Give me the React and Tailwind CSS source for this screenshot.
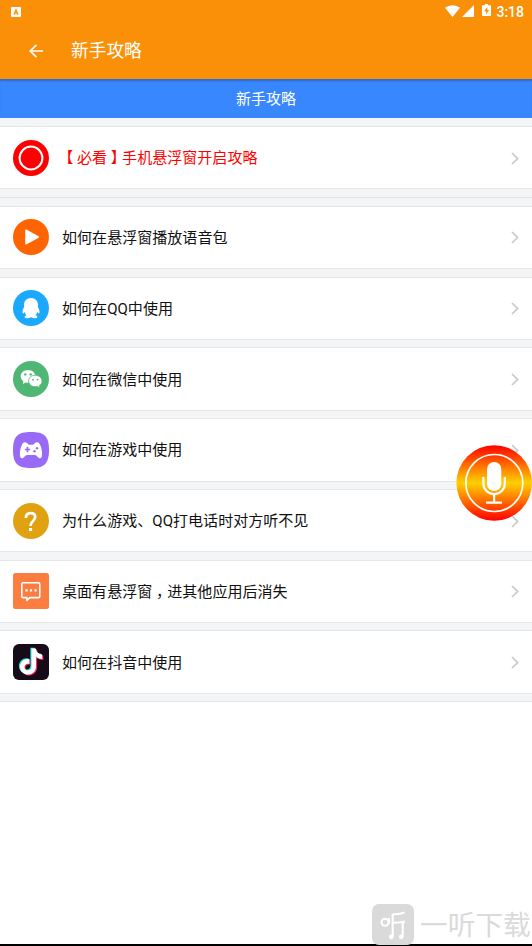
import React from "react";

function Chevron() {
  return (
    <svg className="h-[14px] w-2 shrink-0" viewBox="0 0 8 14" fill="none" stroke="#c8c8cc" strokeWidth="1.7">
      <path d="M1 2 6.6 7.500 1 13" />
    </svg>
  );
}

function RecordIcon() {
  return (
    <svg className="size-9 shrink-0" viewBox="0 0 36 36">
      <circle cx="18" cy="18" r="18" fill="#fe0000" />
      <circle cx="18" cy="18" r="11.4" fill="none" stroke="#fff" strokeWidth="2" />
    </svg>
  );
}

function PlayIcon() {
  return (
    <svg className="size-9 shrink-0" viewBox="0 0 36 36">
      <circle cx="18" cy="18" r="18" fill="#ff6400" />
      <path d="M13 11.2v13.600L25.200 18z" fill="#fff" stroke="#fff" strokeWidth="1.6" strokeLinejoin="round" />
    </svg>
  );
}

function QQIcon() {
  return (
    <svg className="size-9 shrink-0" viewBox="0 0 36 36">
      <circle cx="18" cy="18" r="18" fill="#1aa9ff" />
      <path
        d="M18 8c-4.300 0-7 3-7 7v2.200c-.9 1.600-1.500 3.200-1.500 4.600 0 1 .2 1.600.6 1.700.5.100 1.100-.7 1.500-1.400.4 1.300 1 2.300 1.900 3.200-1.200.4-1.900 1-1.900 1.600 0 .8 1.500 1.300 3.300 1.300 1.400 0 2.600-.5 3.100-1.200.5.700 1.700 1.200 3.100 1.200 1.800 0 3.300-.5 3.300-1.300 0-.6-.7-1.200-1.900-1.600.9-.9 1.500-1.900 1.900-3.200.4.700 1 1.500 1.500 1.400.4-.1.600-.7.600-1.700 0-1.400-.6-3-1.500-4.600V15c0-4-2.700-7-7-7z"
        fill="#fff"
      />
    </svg>
  );
}

function WeChatIcon() {
  return (
    <svg className="size-9 shrink-0" viewBox="0 0 36 36">
      <circle cx="18" cy="18" r="18" fill="#50b674" />
      <path d="M15 9c-4.200 0-7.300 2.800-7.300 6.300 0 2 1 3.800 2.700 5L9.800 23l2.900-1.600c.8.200 1.500.3 2.300.3 4.200 0 7.300-2.800 7.300-6.400C22.300 11.800 19.200 9 15 9z" fill="#fff" />
      <path
        d="M22.300 14.300c-3.800 0-6.700 2.500-6.700 5.700s2.900 5.700 6.700 5.700c.8 0 1.500-.1 2.200-.3l2.400 1.500-.6-2.400c1.700-1 2.700-2.700 2.700-4.500 0-3.200-2.900-5.700-6.700-5.700z"
        fill="#fff"
        stroke="#50b674"
        strokeWidth="0.8"
      />
      <g fill="#50b674">
        <circle cx="12.300" cy="13.400" r="1.200" />
        <circle cx="17.700" cy="13.400" r="1.200" />
        <circle cx="20" cy="18.700" r="0.9" />
        <circle cx="24.600" cy="18.700" r="0.9" />
      </g>
    </svg>
  );
}

function GameIcon() {
  return (
    <svg className="size-9 shrink-0" viewBox="0 0 36 36">
      <path d="M18 0C31 0 36 4 36 18S31 36 18 36 0 32 0 18 5 0 18 0z" fill="#996af5" />
      <path
        d="M10.200 10.800c1-.9 3-.8 3.800.2.600.7 1.300 1.700 2.100 1.700h3.800c.8 0 1.500-1 2.100-1.700.8-1 2.800-1.100 3.800-.2 2 2.200 3.300 7.300 3.300 11.600 0 2.500-.8 3.800-2.100 3.800-2 0-3-3.300-5.100-3.300h-7.800c-2.100 0-3.100 3.300-5.100 3.300-1.300 0-2.100-1.300-2.100-3.800 0-4.300 1.300-9.400 3.300-11.600z"
        fill="#fff"
      />
      <path d="M14.500 14.800v5.400M11.800 17.500h5.400" stroke="#996af5" strokeWidth="1.700" />
      <circle cx="24" cy="16.300" r="1.200" fill="#996af5" />
      <circle cx="21.500" cy="19.300" r="1.200" fill="#996af5" />
    </svg>
  );
}

function QuestionIcon() {
  return (
    <svg className="size-9 shrink-0" viewBox="0 0 36 36">
      <circle cx="18" cy="18" r="18" fill="#e1a212" />
      <path d="M12.900 15c0-3.200 1.800-4.900 4.700-4.900 2.800 0 4.600 1.600 4.600 4 0 3.600-4.700 4.200-4.700 8.900" fill="none" stroke="#fff" strokeWidth="2.700" />
      <rect x="16" y="25" width="3.100" height="3.100" fill="#fff" />
    </svg>
  );
}

function ChatIcon() {
  return (
    <svg className="size-9 shrink-0" viewBox="0 0 36 36">
      <rect width="36" height="36" rx="2.500" fill="#fb7d40" />
      <path
        d="M10.200 9.800h15.200c.8 0 1.400.6 1.400 1.400v12c0 .8-.6 1.400-1.400 1.400h-8.600l-2.900 2.900v-2.900h-3.700c-.8 0-1.400-.6-1.400-1.400v-12c0-.8.6-1.400 1.400-1.400z"
        fill="none"
        stroke="#fff"
        strokeWidth="1.600"
        strokeLinejoin="round"
      />
      <path d="M12.400 17.300h2.200M16.900 17.300h2.200M21.400 17.300h2.200" stroke="#fff" strokeWidth="2.200" />
    </svg>
  );
}

function DouyinIcon() {
  const note = "M18.300 4.500h4.300c.5 3.600 2.700 5.700 6.400 6v4.500c-2.400 0-4.500-.7-6.200-1.900v9.300c0 4.700-3.600 8.100-8 8.100s-8-3.400-8-7.800c0-4.800 4.300-8.500 9.400-7.600v4.800c-2.700-.8-4.900.7-4.900 3s1.600 3.400 3.500 3.400c2.100 0 3.500-1.500 3.500-3.800z";
  return (
    <svg className="size-9 shrink-0" viewBox="0 0 36 36">
      <rect width="36" height="36" rx="6" fill="#170b1a" />
      <path d={note} fill="#25e5e0" transform="translate(-.9 -.8)" />
      <path d={note} fill="#fe2c55" transform="translate(1.300 .9)" />
      <path d={note} fill="#fff" transform="translate(.2 0)" />
    </svg>
  );
}

// Full-width punctuation with its glyph centred in the character cell.
function Punct({ children }) {
  return (
    <span className="inline-block w-[15px] text-center font-['Noto_Sans_CJK_SC',sans-serif] leading-none [font-feature-settings:'halt']">
      {children}
    </span>
  );
}

const guides = [
  { Icon: PlayIcon, label: "如何在悬浮窗播放语音包" },
  { Icon: QQIcon, label: "如何在QQ中使用" },
  { Icon: WeChatIcon, label: "如何在微信中使用" },
  { Icon: GameIcon, label: "如何在游戏中使用" },
  { Icon: QuestionIcon, label: "为什么游戏、QQ打电话时对方听不见" },
  {
    Icon: ChatIcon,
    label: (
      <>
        桌面有悬浮窗<Punct>，</Punct>进其他应用后消失
      </>
    ),
  },
  { Icon: DouyinIcon, label: "如何在抖音中使用" },
];

function Row({ Icon, label, important }) {
  return (
    <div className="flex h-[63.4px] shrink-0 items-center border-y border-[#e5e6e8] bg-white pr-[13px] pl-[13px]">
      <Icon />
      <span className={`ml-[13px] flex-1 pt-px text-[15.05px] leading-6 whitespace-nowrap ${important ? "text-[#fe0000]" : "text-[#111]"}`}>
        {label}
      </span>
      <Chevron />
    </div>
  );
}

function StatusBar() {
  return (
    <div className="flex h-[22px] items-center justify-between pt-px pr-[8px] pl-[11px] text-white">
      <svg className="size-[10px]" viewBox="0 0 10 10">
        <rect width="10" height="10" rx="1" fill="#fff" />
        <path d="M2.900 7.800 5 2.700l2.100 5.100M3.700 6.200h2.600" fill="none" stroke="#fa9008" strokeWidth="1.200" />
      </svg>
      <div className="flex items-center">
        <svg className="mb-px h-3 w-[15px]" viewBox="0 0 15 12">
          <path d="M0 2.800C4.500-.7 10.500-.7 15 2.800L7.500 12z" fill="#fff" />
        </svg>
        <svg className="mb-px ml-[2px] h-3 w-3" viewBox="0 0 12 12">
          <path d="M12 0v12H0z" fill="#fff" />
        </svg>
        <svg className="mb-[3px] ml-[8px] h-3 w-[9px]" viewBox="0 0 9 12">
          <path d="M3 0h3v1.300h2c.6 0 1 .4 1 1V11c0 .6-.4 1-1 1H1c-.6 0-1-.4-1-1V2.300c0-.6.4-1 1-1h2z" fill="#fff" />
          <path d="M5.300 3 2.200 7.200h1.900V10.500l3-4.400H5.300z" fill="#fa9008" />
        </svg>
        <span className="ml-[5px] font-[Roboto,sans-serif] text-[14px] leading-none font-medium">3:18</span>
      </div>
    </div>
  );
}

function MicButton() {
  return (
    <svg className="absolute top-[445px] left-[456px] size-[76px]" viewBox="0 0 76 76">
      <defs>
        <linearGradient id="mic" x1="0" y1="0" x2="0" y2="1">
          <stop offset="0" stopColor="#ff0000" />
          <stop offset="0.500" stopColor="#ffd000" />
          <stop offset="1" stopColor="#ff0000" />
        </linearGradient>
      </defs>
      <circle cx="38.200" cy="38" r="37.800" fill="url(#mic)" />
      <g fill="none" stroke="#fff">
        <circle cx="38.300" cy="38" r="28.500" strokeWidth="1.700" />
        <path d="M27.400 32v6.500a10.700 10.700 0 0 0 21.400 0V32M38.100 49v8M30 57.700h16" strokeWidth="2.200" />
      </g>
      <rect x="31" y="17" width="14.300" height="29" rx="7.100" fill="#fff" />
    </svg>
  );
}

function Watermark() {
  return (
    <div className="absolute top-[904px] left-[372px] flex h-[42px] items-center text-[#dadada]">
      <svg className="size-[42px] shrink-0" viewBox="0 0 42 42" fill="none" stroke="#fff">
        <rect width="42" height="41" rx="7" fill="#dadada" stroke="none" />
        <circle cx="13" cy="18.300" r="3.500" strokeWidth="2" />
        <path d="M17 14v5.500M20.700 10v23M20.700 10.200c4.500.3 8.500-.2 12-1.800M20.700 18.700c4 0 8-.2 12.300-1.200M30.700 18v15" strokeWidth="2.100" />
        <g fill="#fff" stroke="none">
          <circle cx="19.300" cy="32.800" r="2.400" />
          <circle cx="29.300" cy="32.800" r="2.400" />
        </g>
      </svg>
      <span className="ml-[6px] pt-[2px] text-[27.700px] leading-none whitespace-nowrap">一听下载</span>
    </div>
  );
}

export default function App() {
  return (
    <div className="relative flex h-[946px] w-[532px] flex-col overflow-hidden bg-white font-[Roboto,'Noto_Sans_CJK_SC',sans-serif]">
      <header className="h-[79px] shrink-0 bg-[#fa9008] text-white">
        <StatusBar />
        <div className="flex h-[57px] items-center pl-[29px]">
          <svg className="size-[14px]" viewBox="0 0 14 14" fill="none" stroke="#fff" strokeWidth="1.700">
            <path d="M14 7H1.500M7.500.8 1.200 7l6.300 6.200" />
          </svg>
          <h1 className="ml-7 text-[17.700px] leading-6">新手攻略</h1>
        </div>
      </header>
      <div className="flex h-[39px] shrink-0 items-center justify-center bg-[#3887ff] pt-[2px] text-[15px] text-white shadow-[inset_0_3px_2px_-1px_rgba(0,0,0,0.220)]">
        新手攻略
      </div>
      <main className="flex flex-col bg-[#f4f5f7]">
        <div className="border-b border-[#e1e3e5] pt-2 pb-[7.600px]">
          <Row
            Icon={RecordIcon}
            label={
              <>
                <Punct>【</Punct>必看<Punct>】</Punct>手机悬浮窗开启攻略
              </>
            }
            important
          />
        </div>
        <div className="flex flex-col gap-[7.400px] border-b border-[#e5e6e8] pt-[7.800px] pb-[7px]">
          {guides.map((guide, i) => (
            <Row key={i} {...guide} />
          ))}
        </div>
      </main>
      <div className="mt-auto h-[2px] shrink-0 bg-black" />
      <MicButton />
      <Watermark />
    </div>
  );
}
